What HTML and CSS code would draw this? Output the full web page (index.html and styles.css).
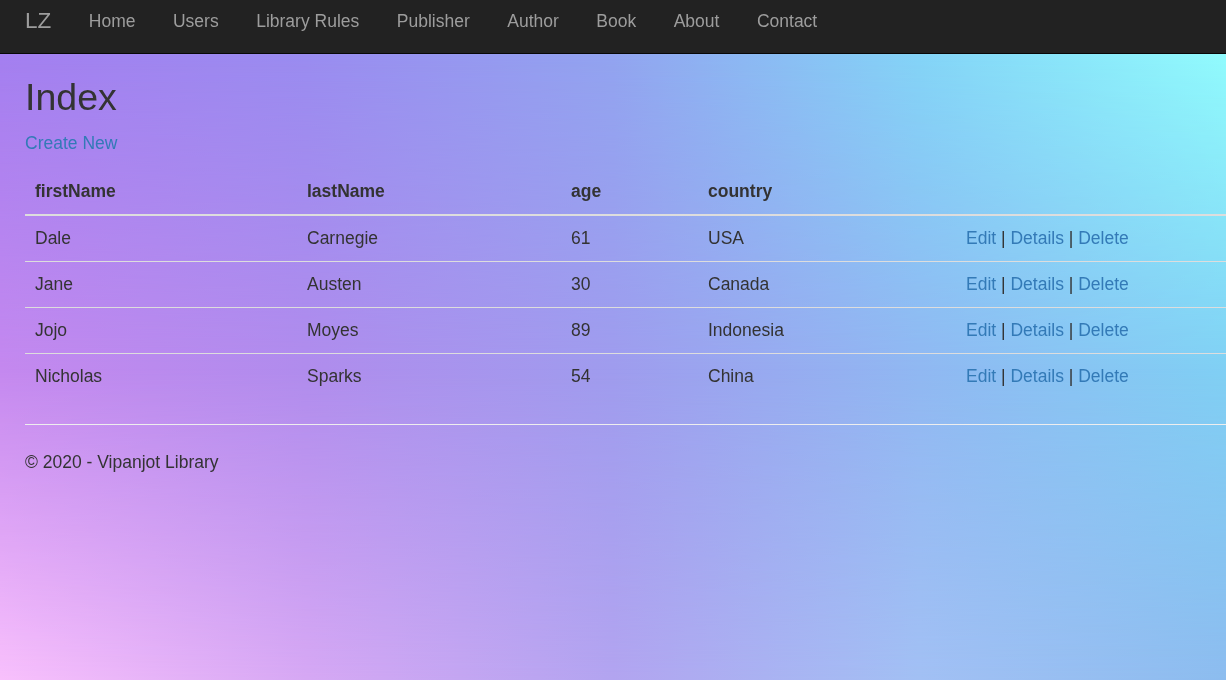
FILE: index.html
```html
<!DOCTYPE html>
<html lang="en">
<head>
<meta charset="utf-8">
<title>Index - Vipanjot Library</title>
<link rel="stylesheet" href="styles.css">
</head>
<body>
<div class="bg-mid"></div>
<div class="bg-bottom"></div>
<nav class="navbar">
  <a class="brand" href="#">LZ</a>
  <ul class="nav">
    <li><a href="#">Home</a></li>
    <li><a href="#">Users</a></li>
    <li><a href="#">Library Rules</a></li>
    <li><a href="#">Publisher</a></li>
    <li><a href="#">Author</a></li>
    <li><a href="#">Book</a></li>
    <li><a href="#">About</a></li>
    <li><a href="#">Contact</a></li>
  </ul>
</nav>
<main class="body-content">
  <h2 class="title">Index</h2>
  <p class="create"><a href="#">Create New</a></p>
  <table class="table">
    <thead>
      <tr>
        <th class="c1">firstName</th>
        <th class="c2">lastName</th>
        <th class="c3">age</th>
        <th class="c4">country</th>
        <th class="c5"></th>
      </tr>
    </thead>
    <tbody>
      <tr>
        <td>Dale</td><td>Carnegie</td><td>61</td><td>USA</td>
        <td><a href="#">Edit</a> | <a href="#">Details</a> | <a href="#">Delete</a></td>
      </tr>
      <tr>
        <td>Jane</td><td>Austen</td><td>30</td><td>Canada</td>
        <td><a href="#">Edit</a> | <a href="#">Details</a> | <a href="#">Delete</a></td>
      </tr>
      <tr>
        <td>Jojo</td><td>Moyes</td><td>89</td><td>Indonesia</td>
        <td><a href="#">Edit</a> | <a href="#">Details</a> | <a href="#">Delete</a></td>
      </tr>
      <tr>
        <td>Nicholas</td><td>Sparks</td><td>54</td><td>China</td>
        <td><a href="#">Edit</a> | <a href="#">Details</a> | <a href="#">Delete</a></td>
      </tr>
    </tbody>
  </table>
  <hr class="rule">
  <footer class="footer">
    <p>&copy; 2020 - Vipanjot Library</p>
  </footer>
</main>
</body>
</html>
```

FILE: styles.css
```css
html {
  min-height: 100%;
  background: linear-gradient(to right, #a47ff0 0%, #9a8cf0 25%, #92a4f0 50%, #84d4f7 75%, #91fbfd 100%);
  background-attachment: fixed;
}

body {
  margin: 0;
  font-family: "Liberation Sans", Arial, Helvetica, sans-serif;
  font-size: 17.5px;
  line-height: 25px;
  color: #333;
}

.bg-mid,
.bg-bottom {
  position: fixed;
  inset: 0;
  z-index: -1;
  pointer-events: none;
}

.bg-mid {
  background: linear-gradient(to right, #c488ef 0%, #b08ced 25%, #9f9cee 50%, #90b8f2 75%, #80d0f4 100%);
  -webkit-mask-image: linear-gradient(to bottom, transparent 8%, #000 54%, #000 100%);
  mask-image: linear-gradient(to bottom, transparent 8%, #000 54%, #000 100%);
}

.bg-bottom {
  background: linear-gradient(to right, #f8c0fc 0%, #d6a8f4 25%, #b2a4f0 50%, #a2c0f4 75%, #8cbcef 100%);
  -webkit-mask-image: linear-gradient(to bottom, transparent 54%, #000 100%);
  mask-image: linear-gradient(to bottom, transparent 54%, #000 100%);
}

a {
  color: #337ab7;
  text-decoration: none;
}

.navbar {
  display: flex;
  align-items: flex-start;
  height: 53px;
  background: #222;
  border-bottom: 1px solid #080808;
}

.brand {
  display: block;
  padding: 8px 18.75px 0 25px;
  font-size: 22.5px;
  line-height: 25px;
  color: #9d9d9d;
}

.nav {
  display: flex;
  margin: 0;
  padding: 0;
  list-style: none;
}

.nav a {
  display: block;
  padding: 8.7px 18.75px 0;
  line-height: 25px;
  color: #9d9d9d;
}

.body-content {
  padding: 0 0 0 25px;
}

.title {
  margin: 22.5px 0 12.5px;
  font-size: 37.5px;
  font-weight: 500;
  line-height: 1.1;
  color: #333;
}

.create {
  margin: 0 0 13.5px;
  padding-top: 0.5px;
}

.table {
  width: 100%;
  border-collapse: collapse;
  border-spacing: 0;
  margin-bottom: 25px;
}

.table th,
.table td {
  padding: 10px;
  line-height: 25px;
  text-align: left;
  vertical-align: top;
}

.table th {
  font-weight: bold;
  border-bottom: 2px solid #ddd;
}

.table td {
  border-top: 1px solid #ddd;
}

.table tbody tr:first-child td {
  border-top: 0;
}

.c1 { width: 252px; }
.c2 { width: 244px; }
.c3 { width: 117px; }
.c4 { width: 238px; }

.rule {
  margin: 25px 0;
  border: 0;
  border-top: 1px solid #eee;
}

.footer p {
  margin: 0 0 12.5px;
}
```
